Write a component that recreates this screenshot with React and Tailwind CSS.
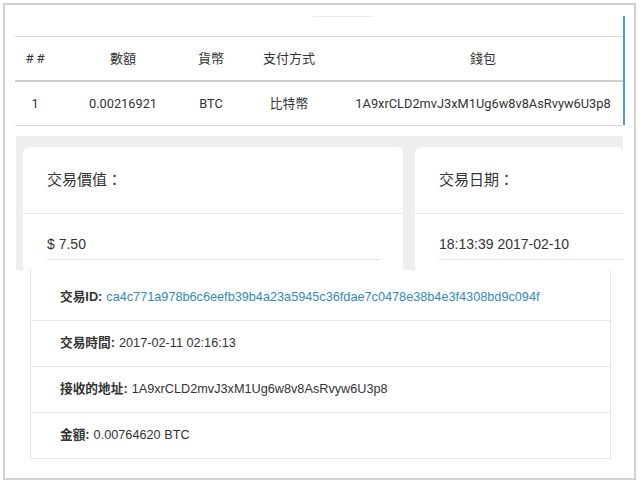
import React from "react";

const cjk = { fontFamily: '"Liberation Sans", "Noto Sans CJK TC", sans-serif' };
const roboto = { fontFamily: 'Roboto, "Noto Sans CJK TC", sans-serif' };

const cols = [
  { w: "w-[40px]", head: "# #", val: "1" },
  { w: "w-[136px]", head: "數額", val: "0.00216921" },
  { w: "w-[40px]", head: "貨幣", val: "BTC" },
  { w: "w-[116px]", head: "支付方式", val: "比特幣" },
  { w: "w-[272px]", head: "錢包", val: "1A9xrCLD2mvJ3xM1Ug6w8v8AsRvyw6U3p8" },
];

const rows = [
  { label: "交易ID:", value: "ca4c771a978b6c6eefb39b4a23a5945c36fdae7c0478e38b4e3f4308bd9c094f", link: true },
  { label: "交易時間:", value: "2017-02-11 02:16:13" },
  { label: "接收的地址:", value: "1A9xrCLD2mvJ3xM1Ug6w8v8AsRvyw6U3p8" },
  { label: "金額:", value: "0.00764620 BTC" },
];

function Card({ title, value, width, padRight }) {
  return (
    <div className={`${width} h-[123px] shrink-0 bg-white rounded-t-[6px] flex flex-col`}>
      <div className="h-[66px] flex items-center pl-[24px] text-[15px] text-[#333]" style={cjk}>
        {title}
      </div>
      <div className="h-px bg-[#e4e4e4]" />
      <div className={`pl-[24px] ${padRight}`}>
        <div className="h-[46px] flex items-end pb-[4px] text-[14px] text-[#333] border-b border-[#e2e2e2]" style={cjk}>
          {value}
        </div>
      </div>
    </div>
  );
}

export default function App() {
  return (
    <div className="w-[640px] h-[483px] bg-white pt-[3px] pl-[3px]">
      <div className="w-[633px] h-[477px] border-2 border-[#d2d2d2] overflow-hidden flex flex-col bg-white">
        {/* top: payment table */}
        <div className="h-[131px] shrink-0 pl-[10px] pt-[11px] flex">
          <div className="w-[608px] flex flex-col">
            <div className="ml-[298px] w-[60px] h-px bg-[#ececec]" />
            <div className="mt-[19px] border-t border-[#dcdcdc]">
              <div className="flex h-[45px] items-center border-b-2 border-[#cfcfcf] text-[13px] text-[#333]" style={roboto}>
                {cols.map((c) => (
                  <div key={c.head} className={`${c.w} shrink-0 text-center`}>
                    {c.head}
                  </div>
                ))}
              </div>
              <div className="flex h-[44px] items-center border-b border-[#dcdcdc] text-[12.8px] text-[#333]" style={roboto}>
                {cols.map((c) => (
                  <div key={c.head} className={`${c.w} shrink-0 text-center`}>
                    {c.val}
                  </div>
                ))}
              </div>
            </div>
          </div>
          <div className="w-[2px] h-[109px] bg-[#4b9be3]" />
        </div>

        {/* middle: value / date cards */}
        <div className="h-[134px] shrink-0 ml-[11px] w-[607px] bg-[#eeeeee] pt-[11px] pl-[7px] flex gap-[12px] overflow-hidden">
          <Card title="交易價值：" value="$ 7.50" width="w-[380px]" padRight="pr-[23px]" />
          <Card title="交易日期：" value="18:13:39 2017-02-10" width="w-[208px]" padRight="pr-0" />
        </div>

        {/* bottom: transaction details */}
        <div className="flex-1 pl-[25px]">
          <div className="w-[581px] border-x border-b border-[#e6e6e6]">
            {rows.map((r, i) => (
              <div
                key={r.label}
                className={`${i === 0 ? "h-[50px] pt-[6px]" : "h-[46px] border-t border-[#e6e6e6]"} flex items-center pl-[29px] text-[12.7px] text-[#333]`}
                style={cjk}
              >
                <span className="font-bold mr-[4px]">{r.label}</span>
                <span className={r.link ? "text-[#2f8ac5]" : ""}>{r.value}</span>
              </div>
            ))}
          </div>
        </div>
      </div>
    </div>
  );
}
